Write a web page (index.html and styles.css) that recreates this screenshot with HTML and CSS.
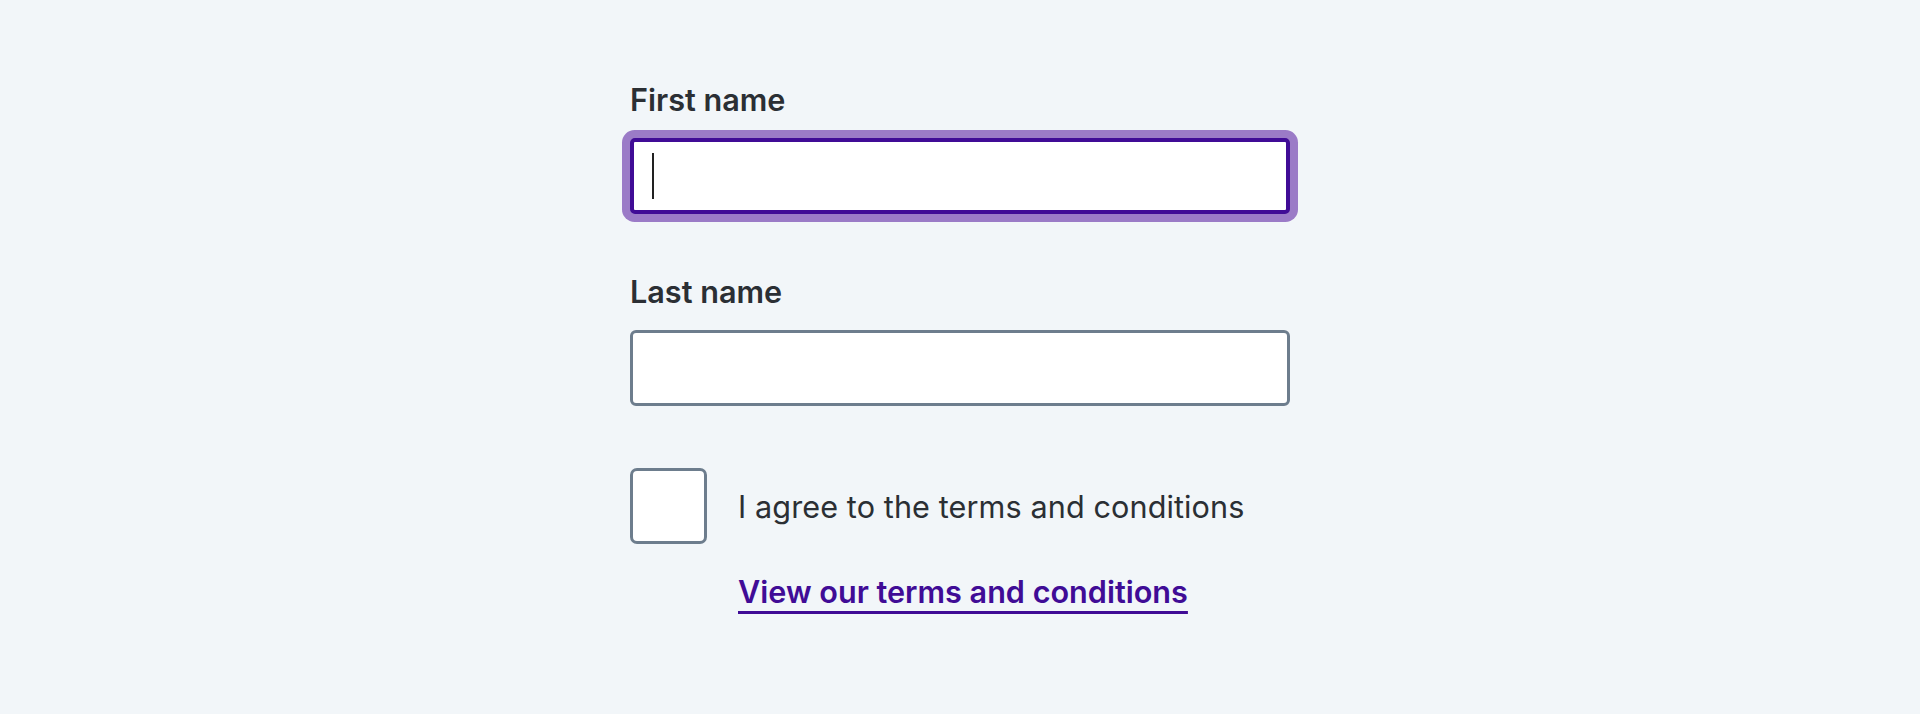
FILE: index.html
```html
<!DOCTYPE html>
<html lang="en">
<head>
<meta charset="utf-8">
<title>Form</title>
<link rel="stylesheet" href="styles.css">
</head>
<body>
<form class="form">
  <div class="group">
    <label class="label">First name</label>
    <div class="field field--focused"><span class="caret"></span></div>
  </div>
  <div class="group">
    <label class="label">Last name</label>
    <div class="field"></div>
  </div>
  <div class="check">
    <span class="checkbox"></span>
    <span class="check-text">I agree to the terms and conditions</span>
  </div>
  <a class="link" href="#">View our terms and conditions</a>
</form>
</body>
</html>
```

FILE: styles.css
```css
html, body {
  margin: 0;
  padding: 0;
}
body {
  background: #f2f6f9;
  font-family: Inter, "Noto Sans", sans-serif;
  color: #2b2f34;
  height: 714px;
}
.form {
  width: 660px;
  margin: 0 auto;
  padding-top: 81px;
  display: flex;
  flex-direction: column;
}
.group {
  display: flex;
  flex-direction: column;
  margin-bottom: 59px;
}
.group + .group {
  margin-bottom: 62px;
}
.label {
  font-size: 30.6px;
  line-height: 38px;
  font-weight: 600;
  margin-bottom: 19px;
}
.field {
  box-sizing: border-box;
  height: 76px;
  background: #fff;
  border: 3px solid #6d7d8d;
  border-radius: 6px;
  display: flex;
  align-items: center;
  padding-left: 18px;
}
.field--focused {
  border: 4px solid #400c96;
  box-shadow: 0 0 0 8px #9b7bc7;
  border-radius: 5px;
}
.caret {
  width: 1.5px;
  height: 46px;
  background: #222;
}
.check {
  display: flex;
  align-items: center;
  gap: 31px;
}
.checkbox {
  box-sizing: border-box;
  width: 77px;
  height: 76px;
  background: #fff;
  border: 3px solid #6d7d8d;
  border-radius: 7px;
  flex: none;
}
.check-text {
  font-size: 30.6px;
  line-height: 38px;
  letter-spacing: 0.1px;
  padding-top: 2px;
}
.link {
  align-self: flex-start;
  margin-left: 108px;
  margin-top: 29px;
  font-size: 30.6px;
  line-height: 38px;
  font-weight: 600;
  color: #400c96;
  text-decoration: underline;
  text-decoration-thickness: 3px;
  text-underline-offset: 8px;
}
```
